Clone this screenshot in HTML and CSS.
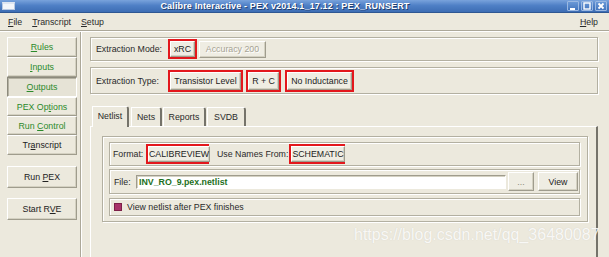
FILE: index.html
```html
<!DOCTYPE html>
<html lang="en">
<head>
    <meta charset="UTF-8">
    <title>Calibre Interactive - PEX</title>
    <link rel="stylesheet" href="styles.css">
</head>
<body>
    <div class="window">
        <div class="titlebar">
            <span class="win-icon"></span>
            <span class="title">Calibre Interactive - PEX v2014.1_17.12 : PEX_RUNSERT</span>
            <span class="win-buttons">
                <span class="win-btn">
                    <svg width="8" height="8" viewBox="0 0 8 8"><rect x="1" y="6" width="5" height="2" fill="#fff"/></svg>
                </span>
                <span class="win-btn">
                    <svg width="8" height="8" viewBox="0 0 8 8"><rect x="1" y="1" width="6" height="6" fill="none" stroke="#fff" stroke-width="1.4"/></svg>
                </span>
                <span class="win-btn">
                    <svg width="8" height="8" viewBox="0 0 8 8"><path d="M1.5 1.5 L6.5 6.5 M6.5 1.5 L1.5 6.5" stroke="#fff" stroke-width="1.8"/></svg>
                </span>
            </span>
        </div>

        <div class="menubar">
            <span class="menu"><u>F</u>ile</span>
            <span class="menu"><u>T</u>ranscript</span>
            <span class="menu"><u>S</u>etup</span>
            <span class="menu help"><u>H</u>elp</span>
        </div>

        <div class="content">
            <div class="sidebar">
                <div class="nav-group">
                    <div class="nav"><span><u>R</u>ules</span></div>
                    <div class="nav"><span><u>I</u>nputs</span></div>
                    <div class="nav selected"><span><u>O</u>utputs</span></div>
                    <div class="nav short"><span>PEX Op<u>t</u>ions</span></div>
                    <div class="nav short"><span>Run <u>C</u>ontrol</span></div>
                    <div class="nav plain"><span>Tr<u>a</u>nscript</span></div>
                </div>
                <div class="nav action"><span>Run <u>P</u>EX</span></div>
                <div class="nav action"><span>Start R<u>V</u>E</span></div>
            </div>

            <div class="main">
                <div class="frame mode-row">
                    <span class="label wide">Extraction Mode:</span>
                    <span class="hl" style="width: 29px"><span class="btn">xRC</span></span>
                    <span class="btn disabled accuracy">Accuracy 200</span>
                </div>

                <div class="frame type-row">
                    <span class="label wide">Extraction Type:</span>
                    <span class="hl" style="width: 75px"><span class="btn">Transistor Level</span></span>
                    <span class="hl" style="width: 35px"><span class="btn">R + C</span></span>
                    <span class="hl" style="width: 69px"><span class="btn">No Inductance</span></span>
                </div>

                <div class="tabs">
                    <span class="tab active" style="width: 37px">Netlist</span>
                    <span class="tab" style="width: 31px">Nets</span>
                    <span class="tab" style="width: 43px">Reports</span>
                    <span class="tab" style="width: 39px">SVDB</span>
                </div>

                <div class="tab-panel">
                    <div class="group">
                        <div class="frame format-row">
                            <span class="label format-label">Format:</span>
                            <span class="hl" style="width: 63px"><span class="btn">CALIBREVIEW</span></span>
                            <span class="label names-label">Use Names From:</span>
                            <span class="hl" style="width: 56px"><span class="btn">SCHEMATIC</span></span>
                        </div>

                        <div class="frame file-row">
                            <span class="label file-label">File:</span>
                            <span class="file-input">INV_RO_9.pex.netlist</span>
                            <span class="btn small dots">...</span>
                            <span class="btn small view">View</span>
                        </div>

                        <div class="frame check-row">
                            <span class="checkbox"></span>
                            <span>View netlist after PEX finishes</span>
                        </div>
                    </div>
                </div>
            </div>
        </div>

        <div class="watermark">https://blog.csdn.net/qq_36480087</div>
    </div>
</body>
</html>
```

FILE: styles.css
```css
* {
    box-sizing: border-box;
}

body {
    margin: 0;
    width: 609px;
    height: 257px;
    overflow: hidden;
    background: #ece9dd;
    font-family: 'Liberation Sans', Arial, sans-serif;
    font-size: 8.8px;
    color: #2a2a2a;
}

.window {
    position: relative;
    height: 257px;
    display: flex;
    flex-direction: column;
}

/* title bar */
.titlebar {
    height: 13px;
    display: flex;
    align-items: center;
    background: linear-gradient(#79a3dc, #4f80c6 45%, #3d6db4);
    border-bottom: 1px solid #2e5792;
}

.win-icon {
    width: 13px;
    height: 8px;
    margin-left: 2px;
    background: #f4f6fa;
    border: 1px solid #b9c9e2;
    border-top: 2px solid #dfe6f1;
}

.title {
    flex: 1;
    text-align: center;
    color: #fff;
    font-weight: bold;
    font-size: 9px;
    letter-spacing: 0.15px;
    text-shadow: 1px 1px 0 #24406e;
    padding-right: 12px;
}

.win-buttons {
    display: flex;
    gap: 2px;
    margin-right: 2px;
}

.win-btn {
    width: 12px;
    height: 10px;
    display: flex;
    align-items: center;
    justify-content: center;
    background: linear-gradient(#6a98d6, #4476bf);
    border: 1px solid #9ab8e2;
    border-radius: 1px;
}

/* menu bar */
.menubar {
    height: 18px;
    display: flex;
    align-items: center;
    gap: 10px;
    padding: 0 11px 0 8px;
    border-bottom: 1px solid #aca899;
}

.help {
    margin-left: auto;
}

/* body */
.content {
    flex: 1;
    display: flex;
    min-height: 0;
    border-top: 1px solid #fff;
}

.sidebar {
    width: 81px;
    padding: 5px 3px 0 7px;
    border-right: 1px solid #aca899;
    box-shadow: 1px 0 0 #fff;
}

.nav {
    height: 20px;
    display: flex;
    align-items: center;
    justify-content: center;
    color: #2b8a2b;
    border: 1px solid;
    border-color: #fff #9f9c8d #9f9c8d #fff;
    box-shadow: inset -1px -1px 0 #d4d1c2;
}

.nav.short {
    height: 19px;
}

.nav.selected {
    border-color: #8c8a7c #fff #fff #8c8a7c;
    box-shadow: inset 1px 1px 0 #b5b2a3;
    background: #e6e3d6;
}

.nav.plain,
.nav.action {
    color: #222;
}

.nav.action {
    height: 22px;
    margin-top: 11px;
}

.nav.action + .nav.action {
    margin-top: 10px;
}

.main {
    flex: 1;
    display: flex;
    flex-direction: column;
    padding: 5px 11px 0 9px;
}

/* etched frames */
.frame {
    display: flex;
    align-items: center;
    border: 1px solid #b3b0a1;
    box-shadow: inset 1px 1px 0 #fff, 1px 1px 0 #fff;
}

.mode-row {
    height: 24px;
    padding-left: 5px;
}

.type-row {
    height: 27px;
    margin-top: 6px;
    padding-left: 5px;
}

.label.wide {
    width: 72px;
}

.hl {
    display: flex;
    height: 20px;
    border: 2px solid #e3171c;
}

.type-row .hl {
    height: 22px;
}

.type-row .hl + .hl {
    margin-left: 3px;
}

.type-row .hl:last-child {
    margin-left: 4px;
}

.btn {
    flex: 1;
    display: flex;
    align-items: center;
    justify-content: center;
    white-space: nowrap;
    color: #222;
    background: #efede3;
    border: 1px solid;
    border-color: #fff #9f9c8d #9f9c8d #fff;
    box-shadow: inset -1px -1px 0 #d4d1c2;
}

.btn.disabled {
    color: #a6a394;
    text-shadow: 1px 1px 0 #fff;
}

.accuracy {
    flex: none;
    width: 67px;
    height: 17px;
    margin-left: 2px;
}

/* tabs */
.tabs {
    display: flex;
    margin-top: 12px;
    padding-left: 2px;
    height: 20px;
    align-items: flex-end;
}

.tab {
    height: 19px;
    display: flex;
    align-items: center;
    justify-content: center;
    border-top: 1px solid #fff;
    border-left: 1px solid #fff;
    border-right: 2px solid #75736a;
    border-top-right-radius: 3px;
}

.tab + .tab {
    margin-left: 1px;
}

.tab.active {
    height: 21px;
    margin-bottom: -1px;
    position: relative;
    background: #ece9dd;
    padding-bottom: 2px;
}

.tab.active + .tab {
    margin-left: 2px;
}

.tab-panel {
    flex: 1;
    border-top: 1px solid #fff;
    border-left: 1px solid #fff;
    border-right: 2px solid #75736a;
    padding: 9px 8px 0 11px;
}

.group {
    height: 86px;
    padding: 5px 7px 5px 6px;
    border: 1px solid #b3b0a1;
    box-shadow: inset 1px 1px 0 #fff, 1px 1px 0 #fff;
}

.format-row {
    height: 24px;
    padding-left: 3px;
}

.format-label {
    width: 33px;
}

.names-label {
    margin: 0 1px 0 8px;
}

.file-row {
    height: 25px;
    margin-top: 3px;
    padding-left: 4px;
}

.file-label {
    width: 22px;
}

.file-input {
    width: 370px;
    height: 14px;
    padding-left: 2px;
    display: flex;
    align-items: center;
    background: #fff;
    color: #1d701d;
    font-weight: bold;
    border: 1px solid;
    border-color: #9f9c8d #fff #fff #9f9c8d;
    box-shadow: inset 1px 1px 0 #d4d1c2;
}

.btn.small {
    flex: none;
    height: 19px;
}

.dots {
    width: 26px;
    margin-left: 2px;
    color: #8a8878;
}

.view {
    width: 40px;
    margin-left: 4px;
}

.check-row {
    height: 18px;
    margin-top: 4px;
    padding-left: 4px;
}

.checkbox {
    width: 8px;
    height: 8px;
    margin-right: 5px;
    background: #a8336a;
    border: 1px solid #7c2049;
}

/* watermark over the panel */
.watermark {
    position: absolute;
    left: 354px;
    top: 226px;
    font-size: 16px;
    color: rgba(255, 255, 255, 0.85);
    text-shadow: 0 0 1px rgba(160, 158, 148, 0.35);
    white-space: nowrap;
}
```
